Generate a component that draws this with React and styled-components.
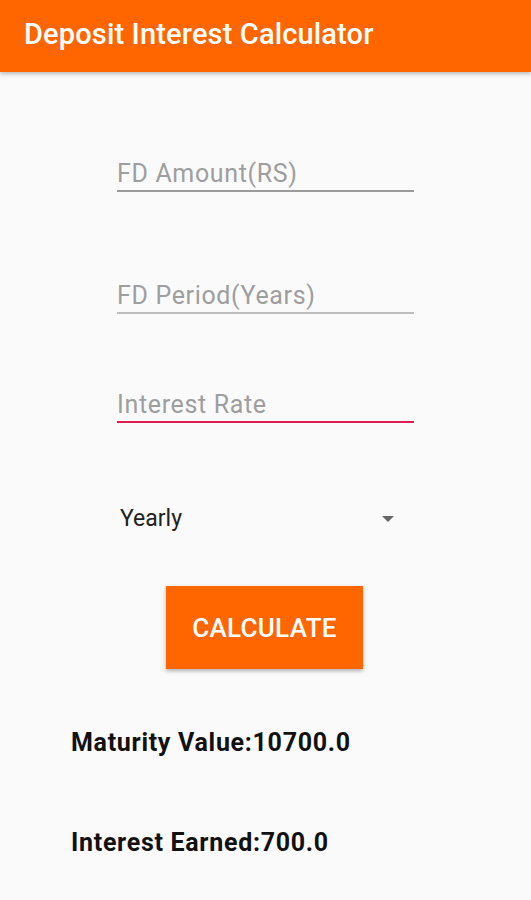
import React from "react";
import styled, { createGlobalStyle } from "styled-components";

const GlobalStyle = createGlobalStyle`
  html, body {
    margin: 0;
    padding: 0;
    background: #fafafa;
  }
  body {
    font-family: Roboto, "Noto Sans", sans-serif;
  }
`;

const Screen = styled.div`
  width: 531px;
  min-height: 900px;
  background: #fafafa;
  display: flex;
  flex-direction: column;
`;

const AppBar = styled.header`
  height: 72px;
  background: #ff6600;
  display: flex;
  align-items: center;
  padding-left: 24px;
  box-shadow: 0 2px 4px rgba(0, 0, 0, 0.25);
  position: relative;
  z-index: 1;
`;

const Title = styled.h1`
  margin: -4px 0 0;
  color: #fff;
  font-size: 29px;
  font-weight: 500;
  letter-spacing: 0.15px;
`;

const Form = styled.div`
  display: flex;
  flex-direction: column;
  align-items: flex-start;
  padding: 86px 0 0 117px;
`;

const Field = styled.div`
  width: 297px;
  margin-bottom: ${(p) => p.gap || 0}px;
`;

const Input = styled.input`
  display: block;
  width: 100%;
  box-sizing: border-box;
  border: none;
  border-bottom: 2px solid ${(p) => (p.focused ? "#dc1f50" : p.tone || "#bdbdbd")};
  background: transparent;
  padding: 0 0 2px;
  height: 34px;
  font-family: Roboto, sans-serif;
  font-size: 25px;
  letter-spacing: 0.65px;
  line-height: 28px;
  color: #222;
  outline: none;
  &::placeholder {
    color: #9e9e9e;
  }
`;

const Spinner = styled.div`
  width: 274px;
  display: flex;
  align-items: center;
  justify-content: space-between;
  padding-left: 3px;
  margin-top: 82px;
`;

const SpinnerText = styled.span`
  font-size: 23px;
  color: #212121;
`;

const Arrow = styled.span`
  width: 0;
  height: 0;
  border-left: 6px solid transparent;
  border-right: 6px solid transparent;
  border-top: 6px solid #666;
`;

const ButtonRow = styled.div`
  display: flex;
  justify-content: center;
  margin: 54px 0 0 -117px;
  width: 531px;
  padding-right: 2px;
  box-sizing: border-box;
`;

const Button = styled.button`
  width: 197px;
  height: 83px;
  border: none;
  background: #ff6600;
  color: #fff;
  font-family: Roboto, sans-serif;
  font-size: 26px;
  font-weight: 500;
  letter-spacing: 0.3px;
  box-shadow: 0 2px 4px rgba(0, 0, 0, 0.3);
`;

const Results = styled.div`
  display: flex;
  flex-direction: column;
  gap: 71px;
  padding: 59px 0 0 71px;
`;

const Result = styled.div`
  font-size: 25px;
  font-weight: 700;
  letter-spacing: 0.7px;
  color: #111;
`;

export default function App() {
  return (
    <>
      <GlobalStyle />
      <Screen>
        <AppBar>
          <Title>Deposit Interest Calculator</Title>
        </AppBar>
        <Form>
          <Field gap={88}>
            <Input placeholder="FD Amount(RS)" tone="#9a9a9a" />
          </Field>
          <Field gap={75}>
            <Input placeholder="FD Period(Years)" tone="#bdbdbd" />
          </Field>
          <Field>
            <Input placeholder="Interest Rate" focused />
          </Field>
          <Spinner>
            <SpinnerText>Yearly</SpinnerText>
            <Arrow />
          </Spinner>
          <ButtonRow>
            <Button>CALCULATE</Button>
          </ButtonRow>
        </Form>
        <Results>
          <Result>Maturity Value:10700.0</Result>
          <Result>Interest Earned:700.0</Result>
        </Results>
      </Screen>
    </>
  );
}
